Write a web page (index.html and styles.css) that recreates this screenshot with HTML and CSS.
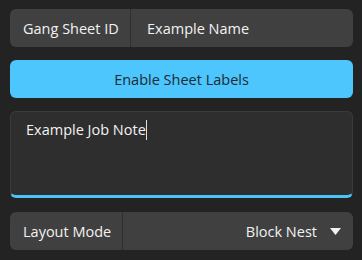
FILE: index.html
```html
<!DOCTYPE html>
<html lang="en">
<head>
    <meta charset="UTF-8">
    <title>Gang Sheet</title>
    <link rel="stylesheet" href="styles.css">
</head>
<body>
    <div class="panel">
        <div class="field">
            <div class="field-label label-id">Gang Sheet ID</div>
            <div class="field-value">Example Name</div>
        </div>

        <button class="btn-primary">Enable Sheet Labels</button>

        <div class="note">Example Job Note<span class="caret"></span></div>

        <div class="field">
            <div class="field-label label-mode">Layout Mode</div>
            <div class="field-value select">
                <span>Block Nest</span>
                <svg class="arrow" width="11" height="8" viewBox="0 0 11 8"><polygon points="0,0 11,0 5.5,7" fill="#f2f2f2"/></svg>
            </div>
        </div>
    </div>
</body>
</html>
```
FILE: styles.css
```css
* {
    margin: 0;
    padding: 0;
    box-sizing: border-box;
}

body {
    font-family: 'Open Sans', 'Noto Sans', sans-serif;
    font-size: 14.5px;
    background-color: #232323;
    color: #f2f2f2;
    padding: 9px 9px 0 10px;
}

.panel {
    display: flex;
    flex-direction: column;
    gap: 13px;
}

/* Label / value rows */
.field {
    display: flex;
    height: 38px;
    background-color: #404040;
    border-radius: 6px;
    overflow: hidden;
}

.field-label {
    display: flex;
    align-items: center;
    padding-left: 13px;
    border-right: 1px solid #2f2f2f;
}

.label-id {
    width: 121px;
}

.label-mode {
    width: 113px;
}

.field-value {
    flex: 1;
    display: flex;
    align-items: center;
    padding-left: 16px;
}

.select {
    justify-content: flex-end;
    padding-right: 12px;
    gap: 13px;
}

.arrow {
    display: block;
    margin-top: 1px;
}

/* Button */
.btn-primary {
    height: 38px;
    border: none;
    border-radius: 6px;
    background-color: #4cc6fd;
    color: #1f2a33;
    font-family: inherit;
    font-size: 14.5px;
}

/* Job note */
.note {
    height: 87px;
    background-color: #2e2e2e;
    border: 1px solid #3b3b3b;
    border-bottom: 3px solid #4cc3f6;
    border-radius: 6px;
    padding: 8px 15px;
    font-size: 14.5px;
}

.note .caret {
    display: inline-block;
    width: 1px;
    height: 20px;
    background-color: #e0e0e0;
    vertical-align: -5px;
}

.panel .field:last-child {
    margin-top: 1px;
}
```
